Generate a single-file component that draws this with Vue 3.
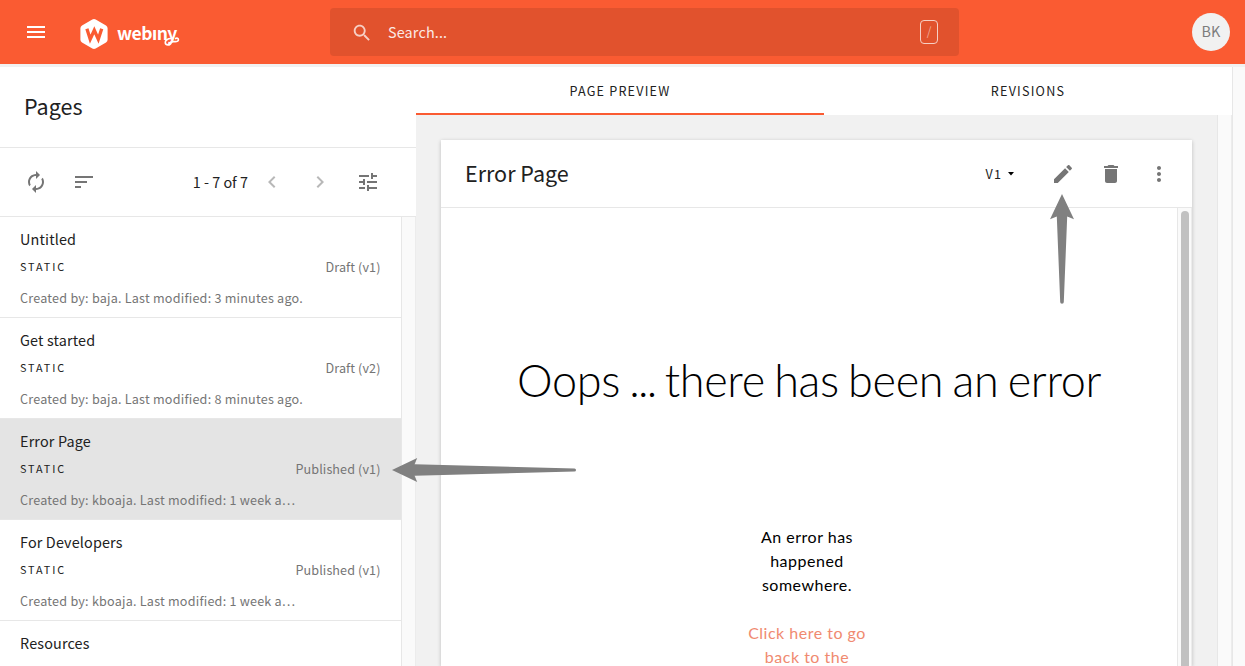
<script setup>
const pages = [
  { title: 'Untitled', status: 'Draft (v1)', meta: 'Created by: baja. Last modified: 3 minutes ago.' },
  { title: 'Get started', status: 'Draft (v2)', meta: 'Created by: baja. Last modified: 8 minutes ago.' },
  { title: 'Error Page', status: 'Published (v1)', meta: 'Created by: kboaja. Last modified: 1 week a…', selected: true },
  { title: 'For Developers', status: 'Published (v1)', meta: 'Created by: kboaja. Last modified: 1 week a…' },
  { title: 'Resources' },
]
</script>

<template>
  <div class="app">
    <header class="topbar">
      <svg class="icon menu" viewBox="0 0 24 24"><path d="M3 18h18v-2H3v2zm0-5h18v-2H3v2zm0-7v2h18V6H3z" /></svg>
      <div class="brand">
        <svg class="hex" viewBox="0 0 28 30"><path d="M12.300.5a3.400 3.400 0 0 1 3.400 0l10.300 5.900a3.200 3.200 0 0 1 1.600 2.800v11.600a3.200 3.200 0 0 1-1.600 2.800l-10.300 5.900a3.400 3.400 0 0 1-3.400 0L2 23.600a3.200 3.200 0 0 1-1.600-2.800V9.200A3.200 3.200 0 0 1 2 6.400z" /><path class="mark" d="M6.900 9.700 10.200 20.200 14.300 11.300 18.300 20.200 21.700 9.700" /></svg>
        <span class="wordmark" aria-label="webiny">webıny</span>
        <svg class="curl" viewBox="0 0 16 12"><path d="M7.600 3.500C3.500 3.300 1 5.500 1.300 7.900c.4 2.800 5 2.700 5.700-.2C7.500 5 14 8.500 14.400 5c.1-1.700-1.500-2.400-2.700-1.500" /></svg>
      </div>
      <div class="search">
        <svg class="icon" viewBox="0 0 24 24"><path d="M15.500 14h-.79l-.28-.27C15.410 12.590 16 11.110 16 9.500 16 5.910 13.090 3 9.500 3S3 5.910 3 9.500 5.910 16 9.500 16c1.610 0 3.090-.59 4.230-1.570l.27.28v.79l5 4.990L20.490 19l-4.990-5zm-6 0C7.010 14 5 11.990 5 9.500S7.010 5 9.500 5 14 7.010 14 9.500 11.990 14 9.500 14z" /></svg>
        <span class="search-text">Search...</span>
        <span class="key">/</span>
      </div>
      <div class="avatar">BK</div>
    </header>

    <div class="body">
      <aside class="left">
        <h1 class="left-title">Pages</h1>
        <div class="tools">
          <svg class="icon" viewBox="0 0 24 24"><path d="M12 6v3l4-4-4-4v3c-4.420 0-8 3.580-8 8 0 1.570.46 3.030 1.240 4.260L6.700 14.800c-.45-.83-.7-1.790-.7-2.800 0-3.310 2.690-6 6-6zm6.760 1.740L17.300 9.200c.44.84.7 1.790.7 2.800 0 3.310-2.690 6-6 6v-3l-4 4 4 4v-3c4.420 0 8-3.580 8-8 0-1.570-.46-3.030-1.240-4.260z" /></svg>
          <svg class="icon" viewBox="0 0 24 24"><path d="M3 18h6v-2H3v2zM3 6v2h18V6H3zm0 7h12v-2H3v2z" /></svg>
          <span class="count">1 - 7 of 7</span>
          <svg class="icon faded" viewBox="0 0 24 24"><path d="M15.410 7.410 14 6l-6 6 6 6 1.410-1.410L10.830 12z" /></svg>
          <svg class="icon faded" viewBox="0 0 24 24"><path d="M10 6 8.590 7.410 13.170 12l-4.580 4.590L10 18l6-6z" /></svg>
          <svg class="icon" viewBox="0 0 24 24"><path d="M3 17v2h6v-2H3zM3 5v2h10V5H3zm10 16v-2h8v-2h-8v-2h-2v6h2zM7 9v2H3v2h4v2h2V9H7zm14 4v-2H11v2h10zm-6-4h2V7h4V5h-4V3h-2v6z" /></svg>
        </div>
        <div class="list-wrap">
          <ul class="list">
            <li v-for="p in pages" :key="p.title" class="item" :class="{ selected: p.selected }">
              <div class="item-title">{{ p.title }}</div>
              <template v-if="p.meta">
                <div class="item-row"><span class="kind">STATIC</span><span class="status">{{ p.status }}</span></div>
                <div class="meta">{{ p.meta }}</div>
              </template>
            </li>
          </ul>
          <div class="gutter"></div>
        </div>
      </aside>

      <main class="right">
        <nav class="tabs">
          <div class="tab active">PAGE PREVIEW</div>
          <div class="tab">REVISIONS</div>
        </nav>
        <div class="preview">
          <section class="card">
            <div class="card-head">
              <h2 class="card-title">Error Page</h2>
              <span class="version">V1</span>
              <svg class="caret" viewBox="0 0 6 4"><path d="M0 0h6L3 3.500z" /></svg>
              <svg class="icon edit" viewBox="0 0 24 24"><path d="M3 17.250V21h3.750L17.810 9.940l-3.750-3.750L3 17.250zM20.710 7.040c.39-.39.39-1.020 0-1.410l-2.340-2.340c-.39-.39-1.020-.39-1.410 0l-1.830 1.830 3.750 3.750 1.830-1.830z" /></svg>
              <svg class="icon" viewBox="0 0 24 24"><path d="M6 19c0 1.100.9 2 2 2h8c1.100 0 2-.9 2-2V7H6v12zM19 4h-3.500l-1-1h-5l-1 1H5v2h14V4z" /></svg>
              <svg class="icon" viewBox="0 0 24 24"><path d="M12 8c1.100 0 2-.9 2-2s-.9-2-2-2-2 .9-2 2 .9 2 2 2zm0 2c-1.100 0-2 .9-2 2s.9 2 2 2 2-.9 2-2-.9-2-2-2zm0 6c-1.100 0-2 .9-2 2s.9 2 2 2 2-.9 2-2-.9-2-2-2z" /></svg>
            </div>
            <div class="card-body">
              <div class="content">
                <h3 class="oops">Oops <span class="dots">...</span> there has been an error</h3>
                <p class="para">An error has<br />happened<br />somewhere.</p>
                <p class="para link">Click here to go<br />back to the</p>
              </div>
              <div class="gutter inner"><div class="thumb"></div></div>
            </div>
          </section>
          <div class="gutter"></div>
        </div>
      </main>
      <div class="gutter page"></div>
    </div>

    <svg class="arrow up" viewBox="0 0 26 112"><path d="M13 1 25 26.200 18.200 23.600 14.800 109a1.800 1.800 0 0 1-3.600 0L7.800 23.600 1 26.200z" /></svg>
    <svg class="arrow side" viewBox="0 0 186 26"><path d="M1 13 26.200 1 23.600 7.200 183.500 11.500a1.500 1.500 0 0 1 0 3L23.600 18.800 26.200 25z" /></svg>
  </div>
</template>

<style>
body { margin: 0; overflow: hidden; }
</style>

<style scoped>
.app {
  position: relative;
  width: 1245px;
  height: 666px;
  overflow: hidden;
  display: flex;
  flex-direction: column;
  background: #fff;
  color: #212121;
  font-family: "Noto Sans CJK SC", "Noto Sans", sans-serif;
}
.app * { box-sizing: border-box; }
h1, h2, h3, p, ul { margin: 0; padding: 0; font-weight: 400; }
span, div { white-space: nowrap; }
.icon { width: 24px; height: 24px; fill: #757575; flex: none; display: block; }
.faded { fill: #b8b8b8; }

.topbar {
  flex: none;
  height: 64px;
  background: #fa5b32;
  display: flex;
  align-items: center;
  padding: 0 15px 0 24px;
}
.menu { fill: #fff; }
.brand { position: relative; width: 102px; height: 30px; margin-left: 32px; margin-top: 4px; display: flex; }
.hex { width: 28px; height: 30px; flex: none; fill: #fff; }
.mark { fill: none; stroke: #fa5b32; stroke-width: 3.3; }
.wordmark {
  margin-left: 9px;
  font-size: 17.5px;
  font-weight: 700;
  line-height: 28px;
  letter-spacing: -.5px;
  color: #fff;
}
.curl { position: absolute; left: 84px; top: 16px; width: 16px; height: 12px; fill: none; stroke: #fff; stroke-width: 1.7; stroke-linecap: round; }
.search {
  width: 629px;
  height: 48px;
  margin-left: 148px;
  border-radius: 4px;
  background: #e1522d;
  display: flex;
  align-items: center;
  padding: 0 21px 0 20px;
}
.search .icon { fill: rgba(255, 255, 255, .72); width: 22px; height: 22px; margin: 2px 1px 0; }
.search-text { margin-left: 14px; font-size: 14.4px; line-height: 24px; letter-spacing: .15px; color: #fbeae5; }
.key {
  margin-left: auto;
  width: 18px;
  height: 24px;
  border: 1px solid #f6cfc4;
  border-radius: 4px;
  color: #f0a994;
  font-size: 12px;
  line-height: 19px;
  text-align: center;
}
.avatar {
  margin-left: auto;
  width: 38px;
  height: 38px;
  border-radius: 50%;
  background: #f1f1f1;
  color: #7c7c7c;
  font-size: 14.4px;
  line-height: 36px;
  text-align: center;
}

.body { flex: 1; min-height: 0; display: flex; border-top: 3px solid #f1f1f1; }
.left { width: 416px; display: flex; flex-direction: column; }
.left-title { height: 81px; padding-left: 24px; border-bottom: 1px solid #e7e7e7; font-size: 21.5px; line-height: 78px; }
.tools { height: 69px; border-bottom: 1px solid #e7e7e7; display: flex; align-items: center; gap: 24px; padding: 0 36px 0 24px; }
.count { margin-left: auto; margin-right: -12px; font-size: 14.4px; line-height: 20px; }
.list-wrap { flex: 1; min-height: 0; display: flex; overflow: hidden; }
.list { width: 401px; list-style: none; }
.item { height: 101px; border-bottom: 1px solid #e7e7e7; padding: 11px 20.500px 0 20px; }
.selected { background: #e4e4e4; }
.item-title { font-size: 14.4px; line-height: 22px; letter-spacing: .15px; }
.item-row { display: flex; justify-content: space-between; height: 32px; align-items: center; }
.kind { font-size: 10.8px; letter-spacing: 1.9px; }
.status { color: #757575; font-size: 12.6px; letter-spacing: .1px; }
.meta { color: #757575; font-size: 12.6px; line-height: 32px; letter-spacing: .22px; }
.gutter { width: 15px; flex: none; background: #fafafa; border-left: 1px solid #e7e7e7; border-right: 1px solid #ececec; }

.right { width: 816px; display: flex; flex-direction: column; }
.tabs { height: 48px; flex: none; display: flex; }
.tab { flex: 1; text-align: center; font-size: 12.6px; line-height: 48px; letter-spacing: 1.2px; }
.active { border-bottom: 2px solid #fa5b32; }
.preview { flex: 1; min-height: 0; display: flex; background: #f1f1f1; }
.card {
  width: 751px;
  margin: 25px 25px 0;
  display: flex;
  flex-direction: column;
  background: #fff;
  box-shadow: 0 1px 4px rgba(0, 0, 0, .22);
}
.card-head { height: 68px; flex: none; border-bottom: 1px solid #e7e7e7; display: flex; align-items: center; padding: 0 21px 0 24px; }
.card-title { font-size: 21.5px; line-height: 64px; margin-right: auto; margin-bottom: 2px; }
.version { font-size: 12.6px; letter-spacing: 1.1px; }
.caret { width: 6px; height: 4px; margin-left: 6px; }
.card-head .icon + .icon { margin-left: 24px; }
.card-head .edit { margin-left: 37px; }
.card-body { flex: 1; min-height: 0; display: flex; overflow: hidden; }
.content { width: 736px; font-family: Lato, sans-serif; text-align: center; color: #000; }
.oops { margin-top: 142px; font-size: 45px; line-height: 60px; font-weight: 300; letter-spacing: -.35px; word-spacing: -2.5px; }
.dots { letter-spacing: -1.8px; }
.para { font-size: 16px; line-height: 24px; letter-spacing: .5px; padding-right: 4px; }
.oops + .para { margin-top: 115px; }
.link { margin-top: 24px; color: #f08a70; }
.inner { padding: 3px 2px 0 3px; }
.thumb { width: 8px; height: 600px; border-radius: 4px; background: #c1c1c1; }
.page { width: 13px; border-right: 0; }

/* pointer callouts laid over the screen */
.arrow { position: absolute; fill: #808080; }
.up { left: 1049px; top: 193px; width: 26px; height: 112px; }
.side { left: 391px; top: 457px; width: 186px; height: 26px; }
</style>
